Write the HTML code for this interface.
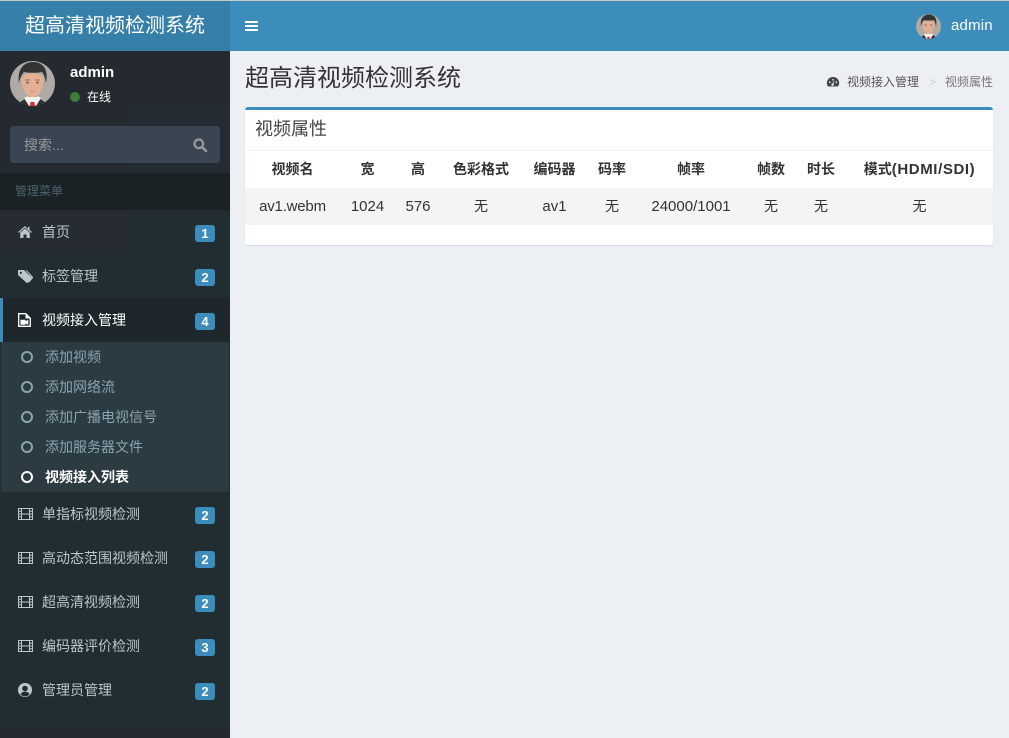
<!DOCTYPE html>
<html lang="zh"><head><meta charset="utf-8"><title>超高清视频检测系统</title>
<style>
*{box-sizing:border-box;margin:0;padding:0}
html,body{width:1009px;height:738px;overflow:hidden;background:#ecf0f5}
body{position:relative;font-family:"Liberation Sans","Noto Sans CJK SC",sans-serif;font-size:14px;color:#333}
.abs{position:absolute;white-space:nowrap}
#top{left:0;top:0;width:1009px;height:1px;background:#c9c9c9}
#logo{left:0;top:1px;width:230px;height:50px;background:#367fa9;color:#fff;font-size:20px;line-height:50px;text-align:center}
#nav{left:230px;top:1px;width:779px;height:50px;background:#3c8dbc}
#side{left:0;top:51px;width:230px;height:687px;background:#222d32}
#side0{left:0;top:51px;width:230px;height:122px;background:#242a30}
.bar{height:2px;width:13px;left:245px;background:#fff}
.mh{left:0;top:173px;width:230px;height:37px;background:#1a2226;color:#4b646f;font-size:12px;line-height:37px;padding-left:15px}
.it{left:0;width:230px;height:44px;color:#b8c7ce;line-height:44px;padding-left:42px;font-size:14px}
.bd{left:195px;width:20px;height:17px;background:#3c8dbc;color:#fff;border-radius:3px;font-size:13px;font-weight:bold;line-height:17px;text-align:center}
.sub{left:0;width:230px;height:30px;color:#8aa4af;font-size:14px;line-height:30px;padding-left:45px}
.ring{left:21px;width:12px;height:12px;border-radius:50%;border:2.4px solid #8aa4af}
svg{position:absolute;overflow:visible}
#tb{position:absolute;left:245px;top:150px;width:748px;border-collapse:collapse;table-layout:fixed;font-size:14px;color:#333}
#tb th,#tb td{text-align:center;vertical-align:middle;padding:0;white-space:nowrap;line-height:20px}
#tb th{height:37px;font-weight:bold;border-top:1px solid #f4f4f4;background:#fff}
#tb td{height:37px;background:#f4f4f5}
.l{font-size:15px}
</style></head><body>
<svg width="0" height="0" style="position:absolute"><defs>
<g id="av">
<clipPath id="cp"><circle cx="22.500" cy="22.500" r="22.500"/></clipPath>
<g clip-path="url(#cp)">
<rect width="45" height="45" fill="#b0aaa6"/>
<path d="M8 45c1-4 5-6 9-8h11c4 2 8 4 9 8z" fill="#2f2f33"/>
<path d="M14 37l4-2h9l4 2-5 8h-7z" fill="#f4f2f0"/>
<path d="M20.500 41h4l.5 4h-5z" fill="#d62f36"/>
<rect x="18" y="28" width="9" height="8" fill="#cf9a80"/>
<path d="M11.500 19c0 9 5 17 11 17s11-8 11-17-22-9-22 0z" fill="#e4b095"/>
<path d="M9 22C7 8 14 1 23 1s16 6 13 21c-1-5-2-9-4-11-5 1-13 1-18 0-2 2-4 6-5 11z" fill="#343434"/>
<rect x="15" y="18.500" width="5" height="1" fill="#96705c"/><rect x="25" y="18.500" width="5" height="1" fill="#96705c"/>
<ellipse cx="17.500" cy="21.500" rx="1.600" ry="1" fill="#7d6a60"/><ellipse cx="27.500" cy="21.500" rx="1.600" ry="1" fill="#7d6a60"/>
<rect x="20" y="30" width="5" height=".8" fill="#c48a75"/>
</g></g>
<g id="film" fill="none" stroke-width="1"><path d="M.5.5h14v11H.5zM3.500.5v11M11.500.5v11M.5 3.200h3M.5 6h3M.5 8.800h3M11.500 3.200h3M11.500 6h3M11.500 8.800h3M3.500 6h8"/></g>
</defs></svg>

<div class="abs" id="top"></div>
<div class="abs" id="logo">超高清视频检测系统</div>
<div class="abs" id="nav"></div>
<div class="abs bar" style="top:21px"></div>
<div class="abs bar" style="top:25px"></div>
<div class="abs bar" style="top:29px"></div>
<svg style="left:916px;top:14px" width="25" height="25" viewBox="0 0 45 45"><use href="#av"/></svg>
<div class="abs" style="left:951px;top:16px;color:#fff;font-size:15px;line-height:20px;letter-spacing:.2px">admin</div>

<div class="abs" id="side"></div>
<div class="abs" id="side0"></div>
<div class="abs" style="left:128px;top:105px;width:102px;height:68px;background:#232c32"></div>
<div class="abs" style="left:0;top:210px;width:128px;height:44px;background:#262c31"></div>
<div class="abs" style="left:0;top:727px;width:230px;height:11px;background:#252a30"></div>
<svg style="left:10px;top:61px" width="45" height="45" viewBox="0 0 45 45"><use href="#av"/></svg>
<div class="abs" style="left:70px;top:63px;color:#fff;font-weight:bold;font-size:15px;line-height:20px">admin</div>
<div class="abs" style="left:70px;top:92px;width:10px;height:10px;border-radius:50%;background:#3d7c3a"></div>
<div class="abs" style="left:87px;top:88px;color:#fff;font-size:12px;line-height:18px">在线</div>
<div class="abs" style="left:10px;top:126px;width:210px;height:37px;background:#3a4553;border-radius:3px"></div>
<div class="abs" style="left:24px;top:135px;color:#999;font-size:14px;line-height:20px">搜索...</div>
<svg style="left:193px;top:138px" width="14" height="14" viewBox="0 0 14 14"><circle cx="5.800" cy="5.800" r="4.300" fill="none" stroke="#999" stroke-width="2.200"/><path d="M9 9l4 4" stroke="#999" stroke-width="2.600" stroke-linecap="round"/></svg>

<div class="abs mh">管理菜单</div>

<div class="abs it" style="top:210px">首页</div>
<svg style="left:18px;top:226px" width="14" height="12" viewBox="0 0 14 12" fill="#b8c7ce"><path d="M7 0L0 6l.8.900L7 1.700l6.200 5.200.8-.9-2.500-2.100V.8H10v2.100z"/><path d="M2.200 6.600L7 2.600l4.800 4V12H8.500V8.500h-3V12H2.200z"/></svg>
<div class="abs bd" style="top:225px">1</div>

<div class="abs it" style="top:254px">标签管理</div>
<svg style="left:18px;top:270px" width="15" height="13" viewBox="0 0 15 13" fill="#b8c7ce"><path fill-rule="evenodd" d="M0 0h6l7.500 7.500c.5.500.5 1.100 0 1.600L9.900 12.600c-.5.500-1.100.5-1.600 0L0 5zM2.800 1.700a1.100 1.100 0 1 0 0 2.200 1.100 1.100 0 0 0 0-2.200z"/><path d="M7.500 0h1l6.200 6.800c.4.500.4 1.100 0 1.600l-3.600 4.100-.7-.6 3.400-4z"/></svg>
<div class="abs bd" style="top:269px">2</div>

<div class="abs" style="left:0;top:298px;width:230px;height:44px;background:#1e282c"></div>
<div class="abs" style="left:0;top:298px;width:3px;height:44px;background:#3c8dbc"></div>
<div class="abs it" style="top:298px;color:#fff">视频接入管理</div>
<svg style="left:18px;top:313px" width="13" height="14" viewBox="0 0 13 14"><path fill="none" stroke="#fff" stroke-width="1.300" d="M.7.700h7l4.600 4.600v8H.7z"/><path fill="#fff" d="M7.500 1l4.500 4.500H7.500zM2.500 6.800h5v1.300l2.800-1.300v5L7.500 10.500v1.300h-5z"/></svg>
<div class="abs bd" style="top:313px">4</div>

<div class="abs" style="left:1px;top:342px;width:228px;height:150px;background:#2c3b41"></div>
<div class="abs ring" style="top:351px"></div><div class="abs sub" style="top:342px">添加视频</div>
<div class="abs ring" style="top:381px"></div><div class="abs sub" style="top:372px">添加网络流</div>
<div class="abs ring" style="top:411px"></div><div class="abs sub" style="top:402px">添加广播电视信号</div>
<div class="abs ring" style="top:441px"></div><div class="abs sub" style="top:432px">添加服务器文件</div>
<div class="abs ring" style="top:471px;border-color:#fff"></div><div class="abs sub" style="top:462px;color:#fff;font-weight:bold">视频接入列表</div>

<div class="abs it" style="top:492px">单指标视频检测</div>
<svg style="left:18px;top:508px" width="15" height="12" stroke="#b8c7ce"><use href="#film"/></svg>
<div class="abs bd" style="top:507px">2</div>

<div class="abs it" style="top:536px">高动态范围视频检测</div>
<svg style="left:18px;top:552px" width="15" height="12" stroke="#b8c7ce"><use href="#film"/></svg>
<div class="abs bd" style="top:551px">2</div>

<div class="abs it" style="top:580px">超高清视频检测</div>
<svg style="left:18px;top:596px" width="15" height="12" stroke="#b8c7ce"><use href="#film"/></svg>
<div class="abs bd" style="top:595px">2</div>

<div class="abs it" style="top:624px">编码器评价检测</div>
<svg style="left:18px;top:640px" width="15" height="12" stroke="#b8c7ce"><use href="#film"/></svg>
<div class="abs bd" style="top:639px">3</div>

<div class="abs it" style="top:668px">管理员管理</div>
<svg style="left:18px;top:683px" width="14" height="14" viewBox="0 0 14 14"><circle cx="7" cy="7" r="7" fill="#b8c7ce"/><circle cx="7" cy="5.500" r="2.800" fill="#222d32"/><path d="M2.500 11.500C3.500 9.300 5 8.800 7 8.800s3.500.5 4.500 2.700C10 13 8.500 13.300 7 13.300s-3-.3-4.500-1.800z" fill="#222d32"/></svg>
<div class="abs bd" style="top:683px">2</div>

<div class="abs" style="left:245px;top:62px;font-size:24px;line-height:34px;color:#333">超高清视频检测系统</div>
<svg style="left:827px;top:77px" width="12" height="10" viewBox="0 0 12 10"><path fill="#444" fill-rule="evenodd" d="M6 0a6 6 0 0 1 5 9.500H1A6 6 0 0 1 6 0zM5.300 2v1.500h1.400V2zM2 4.500V6h1.400V4.500zM8.600 4.500V6H10V4.500zM7.500 3.300L5.500 6.500a1.200 1.200 0 1 0 1 .5z"/></svg>
<div class="abs" style="left:847px;top:73px;font-size:12px;line-height:18px;color:#555">视频接入管理</div>
<div class="abs" style="left:929px;top:73px;font-size:12px;line-height:18px;color:#ccc">&gt;</div>
<div class="abs" style="left:945px;top:73px;font-size:12px;line-height:18px;color:#777">视频属性</div>

<div class="abs" style="left:245px;top:107px;width:748px;height:138px;background:#fff;border-top:3px solid #3c8dbc;border-radius:3px;box-shadow:0 1px 1px rgba(0,0,0,.1)"></div>
<div class="abs" style="left:255px;top:117px;font-size:18px;line-height:24px;color:#444">视频属性</div>
<table id="tb">
<colgroup><col style="width:95px"><col style="width:55px"><col style="width:46px"><col style="width:80px"><col style="width:67px"><col style="width:48px"><col style="width:110px"><col style="width:50px"><col style="width:50px"><col style="width:147px"></colgroup>
<tr><th>视频名</th><th>宽</th><th>高</th><th>色彩格式</th><th>编码器</th><th>码率</th><th>帧率</th><th>帧数</th><th>时长</th><th>模式<span class="l" style="letter-spacing:.6px">(HDMI/SDI)</span></th></tr>
<tr><td><span class="l" style="letter-spacing:-.2px">av1.webm</span></td><td><span class="l">1024</span></td><td><span class="l">576</span></td><td>无</td><td><span class="l">av1</span></td><td>无</td><td><span class="l">24000/1001</span></td><td>无</td><td>无</td><td>无</td></tr>
</table>
</body></html>
